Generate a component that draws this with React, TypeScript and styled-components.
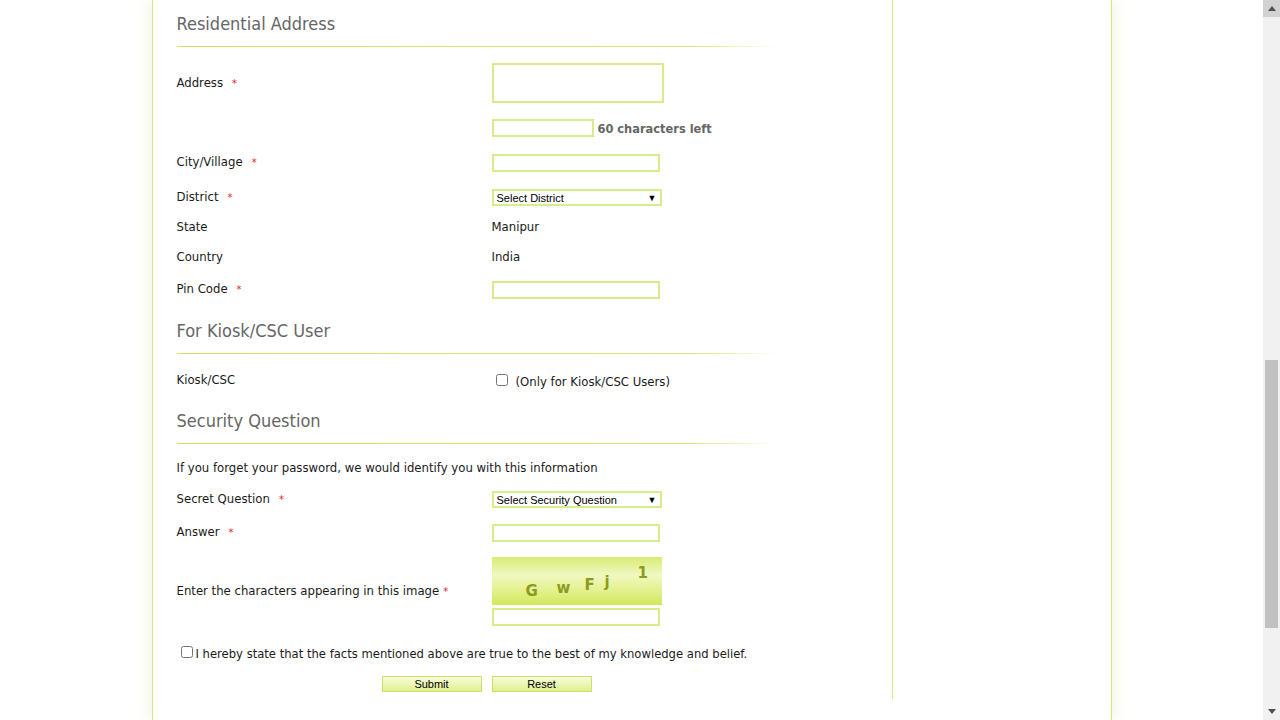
import React from 'react';
import styled, { createGlobalStyle } from 'styled-components';

const GlobalStyle = createGlobalStyle`
    html, body {
        margin: 0;
        padding: 0;
        height: 100%;
        overflow: hidden;
        background: #fff;
    }
    body {
        font-family: "DejaVu Sans Condensed", "DejaVu Sans", sans-serif;
        font-size: 13px;
        color: #1a1a1a;
    }
`

const Page = styled.div`
    display: flex;
    height: 720px;
    width: 1280px;
`

const Viewport = styled.div`
    flex: 1;
    overflow: hidden;
`

const Wrapper = styled.div`
    width: 960px;
    height: 720px;
    margin: 0 auto;
    box-sizing: border-box;
    border-left: 1px solid #d3ea7c;
    border-right: 1px solid #d3ea7c;
    box-shadow: 0 0 16px rgba(200, 222, 120, 0.35);
    background: #fff;
    display: flex;
    align-items: flex-start;
`

const MainColumn = styled.div`
    width: 740px;
    box-sizing: border-box;
    border-right: 1px solid #d3ea7c;
    padding: 0 0 7px 24px;
`

const SideColumn = styled.div`
    flex: 1;
`

const Section = styled.div<{ $mt: number }>`
    margin-top: ${p => p.$mt}px;
    width: 600px;
`

// heading underline fades out towards the right
const SectionTitle = styled.h3`
    margin: 0;
    font-family: "DejaVu Sans Condensed", "DejaVu Sans", sans-serif;
    font-weight: normal;
    font-size: 18px;
    line-height: 20px;
    color: #666;
    padding-bottom: 12px;
    border-bottom: 1px solid #d0e46c;
    border-image: linear-gradient(to right, #cde366 0%, #d8e77c 86%, #ffffff 100%) 1;
`

const Row = styled.div<{ $mt: number; $h: number }>`
    display: grid;
    grid-template-columns: 315px auto;
    align-items: center;
    margin-top: ${p => p.$mt}px;
    height: ${p => p.$h}px;
`

const Label = styled.div`
    line-height: 18px;
`

const Req = styled.span`
    color: #e8231e;
    margin-left: 9px;
    font-size: 11px;
`

const ReqTight = styled(Req)`
    margin-left: 4px;
`

const Field = styled.div`
    display: flex;
    align-items: center;
    gap: 4px;
`

const TextBox = styled.div<{ $w: number; $h: number }>`
    width: ${p => p.$w}px;
    height: ${p => p.$h}px;
    box-sizing: border-box;
    border: 2px solid #d6ee88;
    background: #fff;
`

const Counter = styled.span`
    font-weight: bold;
    color: #666;
    font-size: 12.7px;
`

const SelectBox = styled.div`
    width: 170px;
    height: 17px;
    box-sizing: border-box;
    border: 2px solid #d6ee88;
    display: flex;
    align-items: center;
    justify-content: space-between;
    padding: 0 3px 0 3px;
    font-family: "Liberation Sans", Arial, sans-serif;
    font-size: 11px;
    color: #000;
`

const Caret = styled.span`
    font-size: 9px;
`

const Value = styled.div`
    line-height: 18px;
`

const Check = styled.input.attrs({ type: 'checkbox' })`
    width: 12px;
    height: 12px;
    margin: 0;
    accent-color: #888;
`

const KioskField = styled.div`
    display: flex;
    align-items: center;
    gap: 8px;
    padding-left: 4px;
`

const KioskText = styled.span`
    position: relative;
    top: 1px;
`

const Info = styled.div<{ $mt: number }>`
    margin-top: ${p => p.$mt}px;
    line-height: 18px;
`

const CaptchaStack = styled.div`
    display: flex;
    flex-direction: column;
    gap: 3px;
`

const Captcha = styled.div`
    width: 170px;
    height: 48px;
    background: linear-gradient(to bottom, #d9ec72 0%, #f0f8c2 38%, #e6f39a 62%, #d3e85c 100%);
    font-family: "DejaVu Sans", sans-serif;
    font-size: 15px;
    font-weight: bold;
    color: #8c9a22;
    display: flex;
    align-items: flex-end;
    padding: 0 0 5px 34px;
    box-sizing: border-box;
`

const CaptchaChar = styled.span<{ $dy: number; $w: number }>`
    display: inline-block;
    width: ${p => p.$w}px;
    transform: translateY(${p => -p.$dy}px);
`

const Declaration = styled.div<{ $mt: number }>`
    margin-top: ${p => p.$mt}px;
    display: flex;
    align-items: center;
    gap: 3px;
    padding-left: 4px;
    height: 18px;
    font-family: "DejaVu Sans", Verdana, sans-serif;
    font-size: 11.6px;
`

const DeclCheck = styled(Check)`
    position: relative;
    top: -2px;
`

const Buttons = styled.div<{ $mt: number }>`
    margin-top: ${p => p.$mt}px;
    display: flex;
    gap: 10px;
    padding-left: 205px;
`

const Button = styled.button`
    width: 100px;
    height: 16px;
    padding: 0;
    box-sizing: border-box;
    border: 1px solid #c8e266;
    background: linear-gradient(to bottom, #f8fcdc 0%, #ebf6b0 55%, #deef92 100%);
    font-family: "Liberation Sans", Arial, sans-serif;
    font-size: 11px;
    color: #000;
    line-height: 14px;
`

const ScrollTrack = styled.div`
    width: 17px;
    height: 720px;
    background: #f1f1f1;
    display: flex;
    flex-direction: column;
    align-items: center;
`

const ScrollBtn = styled.div<{ $bg: string }>`
    width: 17px;
    height: 17px;
    background: ${p => p.$bg};
    display: flex;
    align-items: center;
    justify-content: center;
`

const Thumb = styled.div`
    width: 13px;
    height: 268px;
    margin-top: 343px;
    background: #c1c1c1;
`

const Spacer = styled.div`
    flex: 1;
`

const captchaChars = [
    { c: 'G', dy: 0, w: 31 },
    { c: 'w', dy: 3, w: 28 },
    { c: 'F', dy: 6, w: 20 },
    { c: 'j', dy: 9, w: 33 },
    { c: '1', dy: 18, w: 10 },
]

const App: React.FC = () => {
    return (
        <>
            <GlobalStyle />
            <Page>
                <Viewport>
                    <Wrapper>
                        <MainColumn>
                            <Section $mt={14}>
                                <SectionTitle>Residential Address</SectionTitle>
                            </Section>

                            <Row $mt={16} $h={40}>
                                <Label>Address<Req>*</Req></Label>
                                <Field><TextBox $w={172} $h={40} /></Field>
                            </Row>
                            <Row $mt={16} $h={18}>
                                <span />
                                <Field>
                                    <TextBox $w={102} $h={18} />
                                    <Counter>60 characters left</Counter>
                                </Field>
                            </Row>
                            <Row $mt={16} $h={18}>
                                <Label>City/Village<Req>*</Req></Label>
                                <Field><TextBox $w={168} $h={18} /></Field>
                            </Row>
                            <Row $mt={17} $h={17}>
                                <Label>District<Req>*</Req></Label>
                                <Field>
                                    <SelectBox>Select District<Caret>▼</Caret></SelectBox>
                                </Field>
                            </Row>
                            <Row $mt={13} $h={18}>
                                <Label>State</Label>
                                <Value>Manipur</Value>
                            </Row>
                            <Row $mt={12} $h={18}>
                                <Label>Country</Label>
                                <Value>India</Value>
                            </Row>
                            <Row $mt={14} $h={18}>
                                <Label>Pin Code<Req>*</Req></Label>
                                <Field><TextBox $w={168} $h={18} /></Field>
                            </Row>

                            <Section $mt={23}>
                                <SectionTitle>For Kiosk/CSC User</SectionTitle>
                            </Section>
                            <Row $mt={17} $h={18}>
                                <Label>Kiosk/CSC</Label>
                                <KioskField>
                                    <Check />
                                    <KioskText>(Only for Kiosk/CSC Users)</KioskText>
                                </KioskField>
                            </Row>

                            <Section $mt={22}>
                                <SectionTitle>Security Question</SectionTitle>
                            </Section>
                            <Info $mt={15}>If you forget your password, we would identify you with this information</Info>
                            <Row $mt={13} $h={16}>
                                <Label>Secret Question<Req>*</Req></Label>
                                <Field>
                                    <SelectBox>Select Security Question<Caret>▼</Caret></SelectBox>
                                </Field>
                            </Row>
                            <Row $mt={17} $h={18}>
                                <Label>Answer<Req>*</Req></Label>
                                <Field><TextBox $w={168} $h={18} /></Field>
                            </Row>
                            <Row $mt={16} $h={69}>
                                <Label>Enter the characters appearing in this image<ReqTight>*</ReqTight></Label>
                                <CaptchaStack>
                                    <Captcha>
                                        {captchaChars.map(ch => (
                                            <CaptchaChar key={ch.c} $dy={ch.dy} $w={ch.w}>{ch.c}</CaptchaChar>
                                        ))}
                                    </Captcha>
                                    <TextBox $w={168} $h={18} />
                                </CaptchaStack>
                            </Row>

                            <Declaration $mt={19}>
                                <DeclCheck />
                                <span>I hereby state that the facts mentioned above are true to the best of my knowledge and belief.</span>
                            </Declaration>

                            <Buttons $mt={13}>
                                <Button>Submit</Button>
                                <Button>Reset</Button>
                            </Buttons>
                        </MainColumn>
                        <SideColumn />
                    </Wrapper>
                </Viewport>
                <ScrollTrack>
                    <ScrollBtn $bg="#d2d2d2">
                        <svg width="8" height="5" viewBox="0 0 8 5"><path d="M0 5 L4 0 L8 5 Z" fill="#505050" /></svg>
                    </ScrollBtn>
                    <Thumb />
                    <Spacer />
                    <ScrollBtn $bg="#f1f1f1">
                        <svg width="8" height="5" viewBox="0 0 8 5"><path d="M0 0 L4 5 L8 0 Z" fill="#505050" /></svg>
                    </ScrollBtn>
                </ScrollTrack>
            </Page>
        </>
    )
}

export default App;
